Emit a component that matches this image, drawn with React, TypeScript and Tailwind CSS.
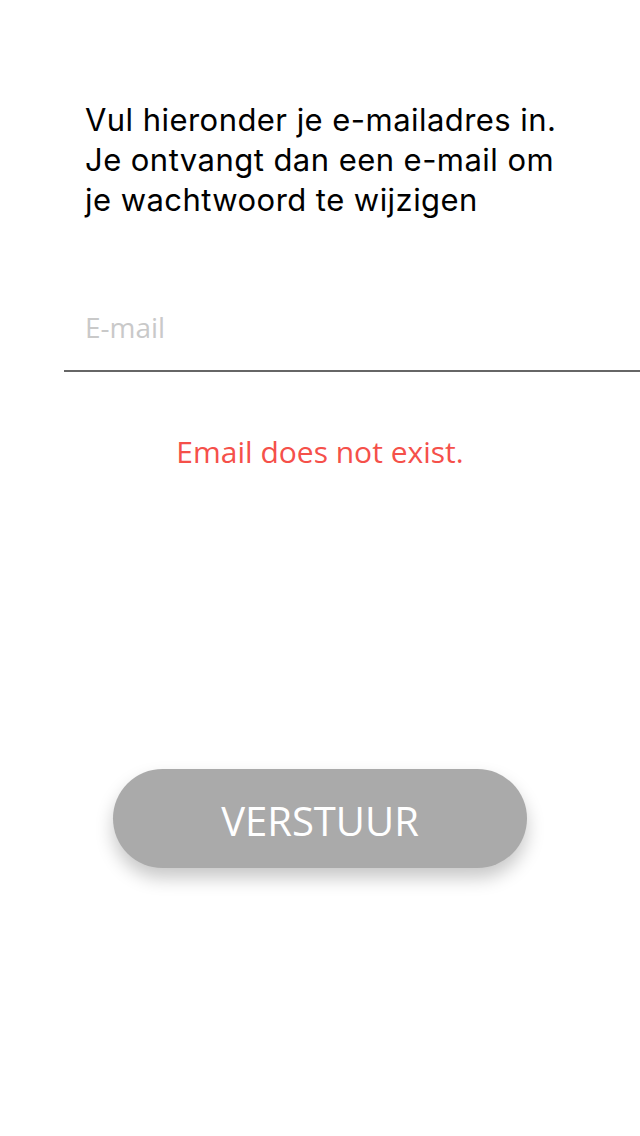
import React from "react";

export default function App() {
  return (
    <div className="w-[640px] h-[1136px] bg-white flex flex-col">
      <div className="pt-[100px] pl-[85px] pr-[20px]">
        <p
          className="text-[31px] leading-[40px] tracking-[0.45px] text-black"
          style={{ fontFamily: "Inter, 'Liberation Sans', sans-serif" }}
        >
          Vul hieronder je e-mailadres in.
          <br />
          Je ontvangt dan een e-mail om
          <br />
          je wachtwoord te wijzigen
        </p>
      </div>
      <div className="mt-[80px] ml-[64px] border-b-2 border-[#666666] h-[72px] flex items-start pt-[9px]">
        <input
          placeholder="E-mail"
          className="ml-[21px] w-full outline-none text-[28px] leading-[36px] placeholder:text-[#c9c9c9] bg-transparent"
          style={{ fontFamily: "'Open Sans', sans-serif" }}
        />
      </div>
      <p
        className="mt-[60px] text-center text-[30px] leading-[40px] text-[#f5504a]"
        style={{ fontFamily: "'Open Sans', sans-serif" }}
      >
        Email does not exist.
      </p>
      <div className="mt-[297px] flex justify-center">
        <button
          className="w-[414px] h-[99px] rounded-full bg-[#aaaaaa] text-white text-[40px] pt-[4px] shadow-[0_10px_18px_rgba(0,0,0,0.22)]"
          style={{ fontFamily: "'Open Sans', sans-serif" }}
        >
          VERSTUUR
        </button>
      </div>
    </div>
  );
}
